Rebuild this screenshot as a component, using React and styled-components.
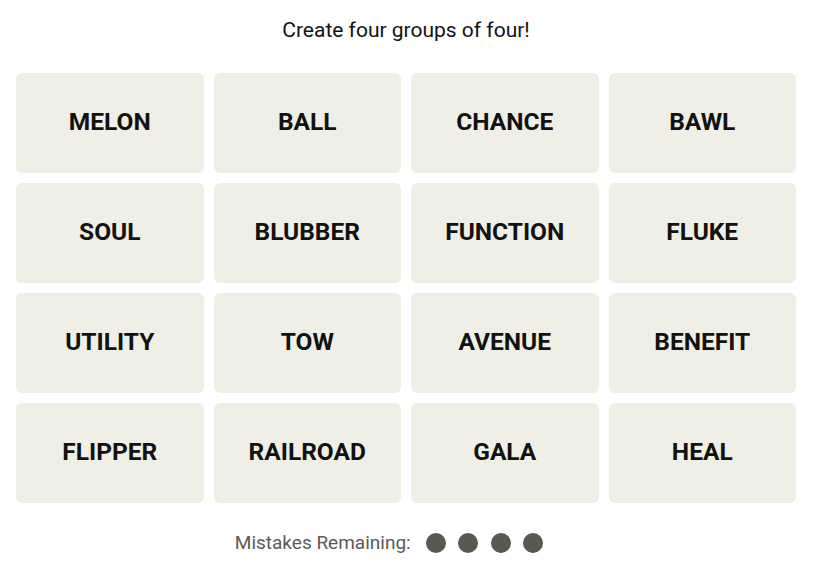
import React from "react";
import styled, { createGlobalStyle } from "styled-components";

const Global = createGlobalStyle`
  body {
    margin: 0;
    background: #fff;
    font-family: Roboto, "Liberation Sans", sans-serif;
    color: #121212;
  }
`;

const Page = styled.div`
  width: 812px;
  display: flex;
  flex-direction: column;
  align-items: center;
`;

const Title = styled.h2`
  margin: 17px 0 0;
  height: 26px;
  line-height: 26px;
  font-size: 21px;
  font-weight: 400;
`;

const Grid = styled.div`
  margin-top: 30px;
  width: 780px;
  display: grid;
  grid-template-columns: repeat(4, 1fr);
  grid-auto-rows: 100px;
  gap: 10px 10px;
`;

const Tile = styled.button`
  border: none;
  border-radius: 6px;
  background: #efefe6;
  color: #121212;
  font-family: Roboto, "Liberation Sans", sans-serif;
  font-weight: 700;
  font-size: 24.5px;
  text-transform: uppercase;
  display: flex;
  align-items: center;
  justify-content: center;
  padding: 0 0 4px;
  cursor: pointer;
`;

const Mistakes = styled.div`
  margin-top: 28px;
  display: flex;
  align-items: center;
  gap: 15px;
  font-size: 19px;
  color: #5a5a5a;
`;

const Dots = styled.div`
  display: flex;
  gap: 12.5px;
  padding-right: 34px;
`;

const Dot = styled.span`
  width: 20px;
  height: 20px;
  border-radius: 50%;
  background: #5a594e;
`;

const words = [
  "Melon", "Ball", "Chance", "Bawl",
  "Soul", "Blubber", "Function", "Fluke",
  "Utility", "Tow", "Avenue", "Benefit",
  "Flipper", "Railroad", "Gala", "Heal",
];

export default function App() {
  return (
    <Page>
      <Global />
      <Title>Create four groups of four!</Title>
      <Grid>
        {words.map((w) => (
          <Tile key={w} type="button">{w}</Tile>
        ))}
      </Grid>
      <Mistakes>
        Mistakes Remaining:
        <Dots>
          {[0, 1, 2, 3].map((i) => (
            <Dot key={i} />
          ))}
        </Dots>
      </Mistakes>
    </Page>
  );
}
